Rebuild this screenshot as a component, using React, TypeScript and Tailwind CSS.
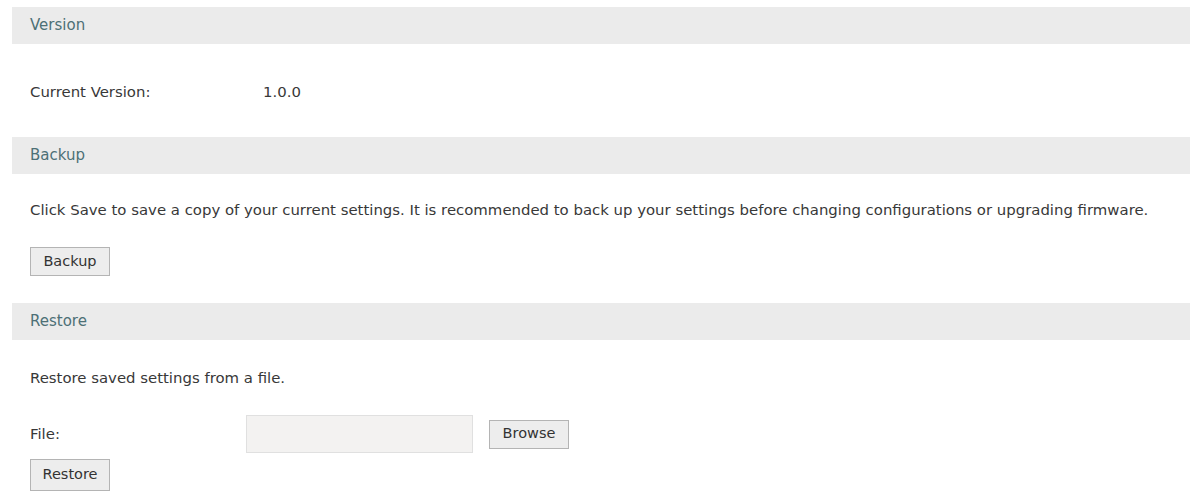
import React from 'react';

function SectionBar({ title }: { title: string }) {
  return (
    <div className="flex h-[37px] items-center bg-[#ebebeb] pl-[18px] text-[15px] text-[#4d7076]">
      {title}
    </div>
  );
}

function GrayButton({ label, className = '' }: { label: string; className?: string }) {
  return (
    <button
      className={`flex h-[29px] w-[80px] items-center justify-center border border-[#b4b4b4] bg-[#ededed] text-[14.5px] text-[#333] ${className}`}
    >
      {label}
    </button>
  );
}

export default function App() {
  return (
    <div className="min-h-screen bg-white pl-[12px] pr-[2px] pt-[7px] font-['DejaVu_Sans',Verdana,sans-serif] text-[14.9px] text-[#383838]">
      <SectionBar title="Version" />
      <div className="flex h-[93px] items-center pl-[18px] pt-[4px]">
        <span className="w-[233px]">Current Version:</span>
        <span>1.0.0</span>
      </div>

      <SectionBar title="Backup" />
      <div className="flex h-[73px] items-center whitespace-nowrap pl-[18px]">
        Click Save to save a copy of your current settings. It is recommended to back up your settings before changing configurations or upgrading firmware.
      </div>
      <GrayButton label="Backup" className="ml-[18px]" />

      <div className="h-[27px]" />
      <SectionBar title="Restore" />
      <div className="flex h-[75px] items-center pl-[18px] pt-[2px]">Restore saved settings from a file.</div>
      <div className="flex items-center pl-[18px]">
        <span className="w-[216px]">File:</span>
        <div className="h-[38px] w-[227px] border border-[#e0e0e0] bg-[#f3f2f1]" />
        <GrayButton label="Browse" className="ml-[16px]" />
      </div>
      <GrayButton label="Restore" className="ml-[18px] mt-[6px] h-[32px]" />
    </div>
  );
}
